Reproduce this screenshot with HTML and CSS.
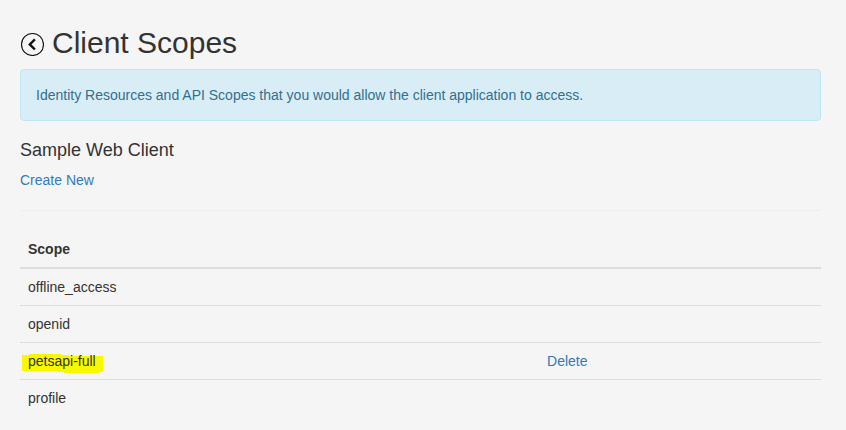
FILE: index.html
```html
<!DOCTYPE html>
<html lang="en">
<head>
  <meta charset="utf-8">
  <meta name="viewport" content="width=device-width, initial-scale=1">
  <title>Client Scopes</title>
  <link rel="stylesheet" href="styles.css">
</head>
<body>
  <main class="page">
    <header class="title">
      <a class="back" href="#" aria-label="Back">
        <svg width="24" height="24" viewBox="0 0 24 24" fill="none" stroke="#111" aria-hidden="true">
          <circle cx="12.5" cy="12.5" r="11" stroke-width="1.1"/>
          <path d="M14.9 7.3 L9.8 12.4 L14.9 17.5" stroke-width="2.4"/>
        </svg>
      </a>
      <h2>Client Scopes</h2>
    </header>
    <div class="alert">Identity Resources and API Scopes that you would allow the client application to access.</div>
    <h4>Sample Web Client</h4>
    <p><a href="#">Create New</a></p>
    <hr>
    <table>
      <colgroup><col class="col-scope"><col></colgroup>
      <thead>
        <tr><th scope="col">Scope</th><td></td></tr>
      </thead>
      <tbody>
        <tr><td>offline_access</td><td></td></tr>
        <tr><td>openid</td><td></td></tr>
        <tr>
          <td>
            <span class="marked">
              <svg class="marker" width="81" height="19" viewBox="0 0 81 19" aria-hidden="true">
                <path fill="#f8f800" d="M0 1H7V0H39V1H47V2H81V18H77V19H42V18H36V17H0Z"/>
              </svg>petsapi-full</span>
          </td>
          <td><a href="#">Delete</a></td>
        </tr>
        <tr><td>profile</td><td></td></tr>
      </tbody>
    </table>
  </main>
</body>
</html>
```
FILE: styles.css
```css
* {
  box-sizing: border-box;
}

body {
  margin: 0;
  background: #f5f5f5;
  color: #333;
  font: 14px/20px "Liberation Sans", Arial, sans-serif;
}

a {
  color: #337ab7;
  text-decoration: none;
}

.page {
  padding: 26px 25px 0 20px;
}

.title {
  display: flex;
  align-items: flex-end;
  gap: 8px;
  margin-bottom: 10px;
}

.back {
  display: flex;
  padding-bottom: 3px;
}

h2,
h4 {
  margin: 0;
  font-weight: 500;
}

h2 {
  font-size: 30px;
  line-height: 33px;
}

h4 {
  margin-bottom: 11px;
  font-size: 18px;
  line-height: 18px;
}

p {
  margin: 0;
}

.alert {
  margin-bottom: 20px;
  padding: 15px;
  border: 1px solid #bce8f1;
  border-radius: 4px;
  background: #d9edf7;
  color: #31708f;
}

hr {
  margin: 20px 0;
  border: 0;
  border-top: 1px solid #eee;
}

table {
  width: 100%;
  border-collapse: separate;
  border-spacing: 0;
  table-layout: fixed;
}

.col-scope {
  width: 64.8%;
}

th,
td {
  padding: 8px;
  text-align: left;
}

thead th,
thead td {
  border-bottom: 2px solid #ddd;
}

tbody tr + tr td {
  border-top: 1px solid #ddd;
}

.marked {
  position: relative;
  z-index: 0;
  display: block;
}

.marker {
  position: absolute;
  z-index: -1;
  top: 3px;
  left: -6px;
}
```
